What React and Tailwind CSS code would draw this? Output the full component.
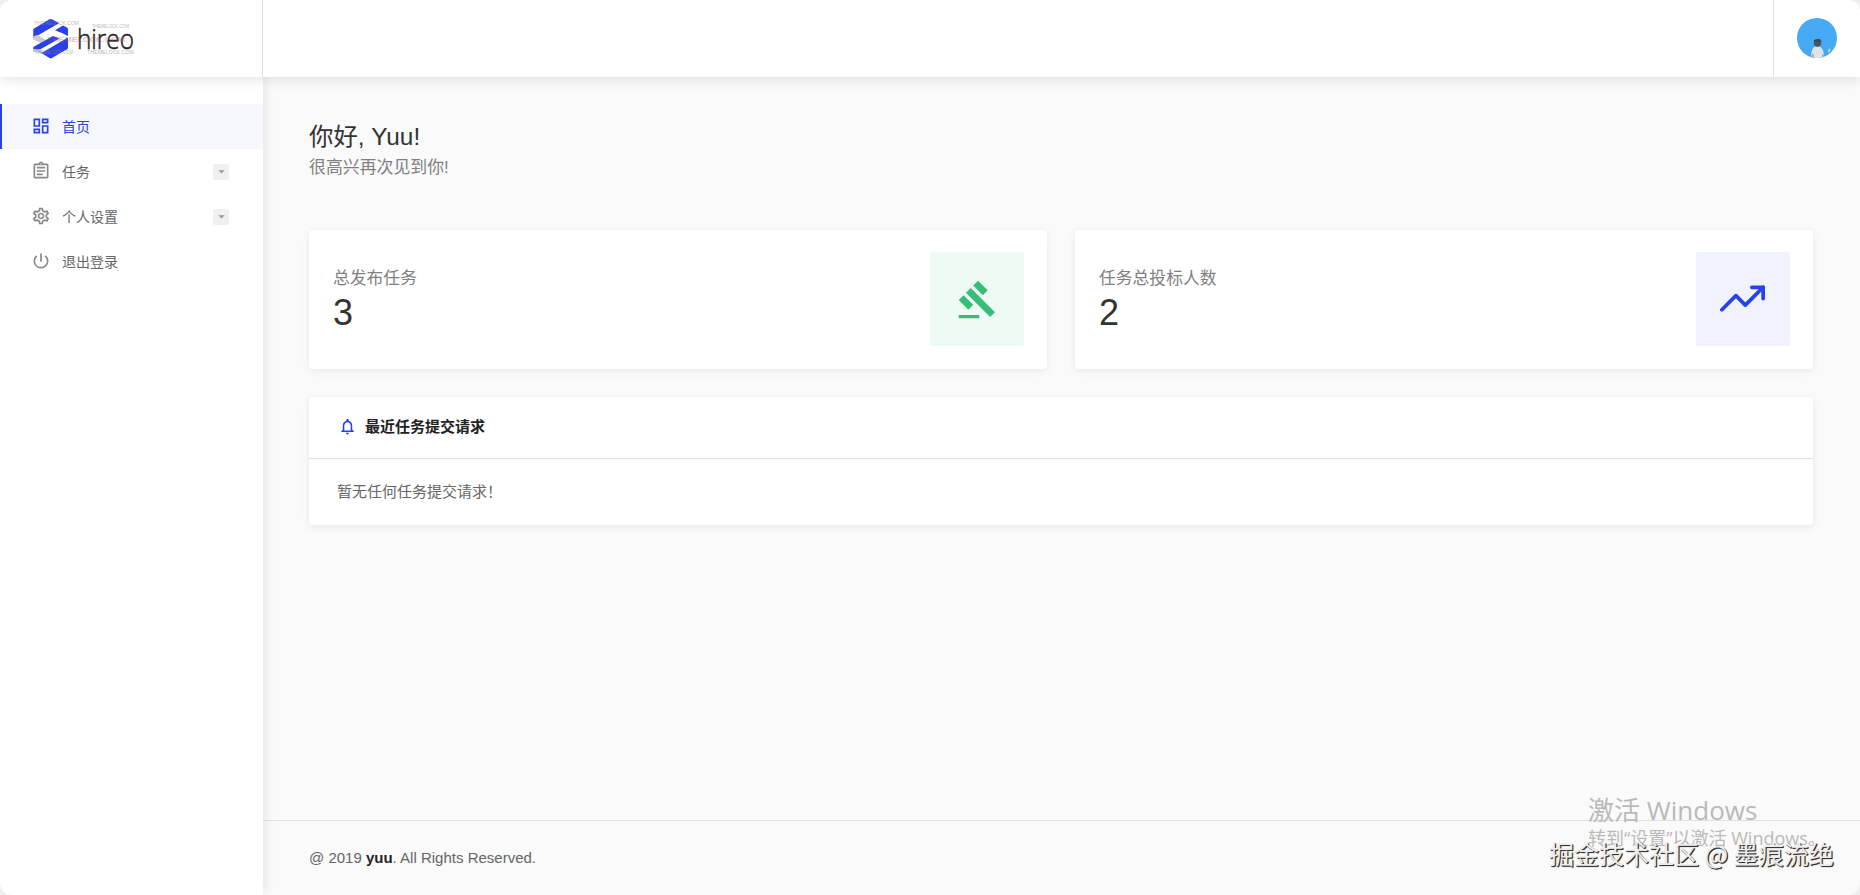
import React, { useState } from 'react';
import {
  MdOutlineDashboard,
  MdOutlineAssignment,
  MdOutlineSettings,
  MdPowerSettingsNew,
  MdNotificationsNone,
  MdArrowDropDown,
  MdGavel,
} from 'react-icons/md';
import { FiTrendingUp } from 'react-icons/fi';

const menu = [
  { id: 'home', label: '首页', icon: MdOutlineDashboard },
  { id: 'tasks', label: '任务', icon: MdOutlineAssignment, sub: true },
  { id: 'settings', label: '个人设置', icon: MdOutlineSettings, sub: true },
  { id: 'logout', label: '退出登录', icon: MdPowerSettingsNew },
];

function Logo() {
  return (
    <svg width="106" height="46" viewBox="0 0 106 46" className="block overflow-visible">
      {/* isotipo */}
      <path d="M1.300 13 L17 3.600 Q18.700 2.600 20.400 3.600 L27 7.300 L1.300 22 Z" fill="#2a41e8" />
      <path d="M1.300 20.500 L5 19 L14 24 L9 27 L1.300 23.500 Z" fill="#c9cad6" />
      <path d="M31 9.600 L35 11.500 Q36 12.200 36 13.500 L36 20 L31 17.500 L23 14.300 Z" fill="#2a41e8" />
      <path d="M1.300 31 L21 20 L27.500 22.500 L8 33.500 L1.300 34.500 Z" fill="#2a41e8" />
      <path d="M1.300 33 L8 33.500 L13 37.500 L10 37.500 L1.300 36 Z" fill="#c9cad6" />
      <path d="M36 21.500 L36 31.500 Q36 32.500 35 33.200 L20.400 41.800 Q18.700 42.800 17 41.800 L9.500 37 Z" fill="#2a41e8" />
      <text
        x="45"
        y="33"
        fontSize="27.500"
        textLength="57"
        lengthAdjust="spacingAndGlyphs"
        fill="#222"
        stroke="#222"
        strokeWidth="0.500"
        className="font-['Open_Sans',sans-serif] font-light"
      >
        hireo
      </text>
      <g fill="#8d8d8d" opacity="0.6" className="font-['Liberation_Sans',sans-serif]">
        <text x="2" y="8.500" fontSize="4.500" textLength="45" lengthAdjust="spacingAndGlyphs">THEMELOCK.COM</text>
        <text x="60" y="12" fontSize="4.500" textLength="37" lengthAdjust="spacingAndGlyphs">THEMELOCK.COM</text>
        <text x="3" y="38" fontSize="4.500" textLength="38" lengthAdjust="spacingAndGlyphs">THEMELOCK.COM</text>
        <text x="55" y="38" fontSize="4.500" textLength="47" lengthAdjust="spacingAndGlyphs">THEMELOCK.COM</text>
        <text x="15" y="25.500" fontSize="7" textLength="78" lengthAdjust="spacingAndGlyphs" fill="#a06070" opacity="0.600" className="font-bold">THEMELOCK.COM</text>
      </g>
    </svg>
  );
}

function Avatar() {
  return (
    <svg width="40" height="40" viewBox="0 0 40 40" className="block rounded-full">
      <rect width="40" height="40" fill="#45a9f3" />
      <path d="M14 40 Q14 30 18 28.500 L23 28.500 Q27 31 27 40 Z" fill="#dfe3ea" />
      <path d="M14 40 L15 35 L17 37 L17 40 Z M25 36 L27 37 L27 40 L25 40 Z" fill="#b9a8aa" />
      <circle cx="20.500" cy="25" r="3.700" fill="#4a5664" />
      <path d="M16.500 23 L18 21.500 L23 21 L24.500 24 Z" fill="#3c4857" />
      <path d="M32 30 L33.500 32 L32 35 L31 33 Z" fill="#b5dcf8" />
    </svg>
  );
}

function Sidebar() {
  const [active, setActive] = useState('home');

  return (
    <aside className="relative z-10 w-[263px] shrink-0 bg-white pt-[27px] shadow-[0_0_12px_rgba(0,0,0,0.11)]">
      {menu.map(({ id, label, icon: Icon, sub }) => (
        <button
          key={id}
          onClick={() => setActive(id)}
          className={`flex h-[45px] w-full items-center border-l-2 pr-[34px] pl-[29px] text-left text-[14px] ${
            active === id ? 'border-[#2a41e8] bg-[#f6f8fe] text-[#2a41e8]' : 'border-transparent text-[#666]'
          }`}
        >
          <Icon className={`relative -top-px size-5 ${active === id ? '' : 'text-[#888]'}`} />
          <span className="ml-[11px] flex-1 leading-5">{label}</span>
          {sub && (
            <span className="flex size-4 items-center justify-center rounded-xs bg-[#f0f0f0] text-[#999]">
              <MdArrowDropDown className="size-[15px]" />
            </span>
          )}
        </button>
      ))}
    </aside>
  );
}

function StatCard({ label, value, box, children }) {
  return (
    <div className="flex h-[139px] flex-1 items-start justify-between rounded-sm bg-white pt-[22px] pr-[23px] pl-6 shadow-[0_2px_8px_rgba(0,0,0,0.08)]">
      <div className="pt-[15px]">
        <p className="text-[16.800px] leading-6 text-[#808080]">{label}</p>
        <h4 className="text-[36px] leading-[44px] text-[#333]">{value}</h4>
      </div>
      <div className={`flex size-[94px] items-center justify-center rounded-xs ${box}`}>{children}</div>
    </div>
  );
}

export default function App() {
  return (
    <div className="h-[895px] w-full bg-[#efefef] font-['Liberation_Sans','Noto_Sans_CJK_SC',sans-serif]">
      <div className="relative flex h-full flex-col overflow-hidden rounded-xl bg-[#fafafa]">
        <header className="relative z-20 flex h-[77px] shrink-0 bg-white shadow-[0_2px_12px_rgba(0,0,0,0.12)]">
          <div className="w-[263px] border-r border-[#e0e0e0] pt-4 pl-8">
            <Logo />
          </div>
          <div className="flex-1" />
          <div className="w-[87px] border-l border-[#e0e0e0] pt-[18px] pl-[23px]">
            <Avatar />
          </div>
        </header>

        <div className="flex flex-1">
          <Sidebar />

          <div className="flex flex-1 flex-col">
            <main className="flex-1 pt-11 pr-[47px] pl-[46px]">
              <h3 className="text-[24.400px] leading-8 text-[#333]">你好, Yuu!</h3>
              <p className="text-[16.900px] leading-[30px] text-[#808080]">很高兴再次见到你!</p>

              <div className="mt-[47px] flex gap-7">
                <StatCard label="总发布任务" value="3" box="bg-[#eefbf5] text-[#36bd78]">
                  <MdGavel className="size-[41px]" />
                </StatCard>
                <StatCard label="任务总投标人数" value="2" box="bg-[#f0f2fe] text-[#2a41e8]">
                  <FiTrendingUp className="relative -top-px -left-px size-[45px]" />
                </StatCard>
              </div>

              <section className="mt-7 rounded-sm bg-white text-[15px] shadow-[0_2px_8px_rgba(0,0,0,0.08)]">
                <div className="flex h-[62px] items-center border-b border-[#e0e0e0] pb-[2px] pl-[29px]">
                  <MdNotificationsNone className="size-[19px] text-[#2a41e8]" />
                  <h3 className="ml-2 leading-6 font-bold text-[#222]">最近任务提交请求</h3>
                </div>
                <div className="flex h-[66px] items-center pl-7 text-[#666]">暂无任何任务提交请求！</div>
              </section>
            </main>

            <footer className="h-[75px] border-t border-[#e0e0e0] pt-[25px] pl-[46px] text-[15px] leading-6 text-[#666]">
              @ 2019 <strong className="text-[#222]">yuu</strong>. All Rights Reserved.
            </footer>
          </div>
        </div>

        {/* Marcas de agua */}
        <div className="pointer-events-none absolute top-[792px] left-[1588px] z-30 font-['Open_Sans','Noto_Sans_CJK_SC',sans-serif] whitespace-nowrap text-[#b9b9b9]">
          <div className="text-[26px] leading-9">激活 Windows</div>
          <div className="-mt-[2px] text-[18px] leading-6">转到“设置”以激活 Windows。</div>
        </div>
        <div className="pointer-events-none absolute top-[835px] left-[1549px] z-30 font-['Noto_Sans_CJK_SC',sans-serif] text-[25px] leading-9 whitespace-nowrap text-[#eee] [text-shadow:1px_1px_0_#333,1px_1px_1px_#222]">
          掘金技术社区 @ 墨痕流绝
        </div>
      </div>
    </div>
  );
}
